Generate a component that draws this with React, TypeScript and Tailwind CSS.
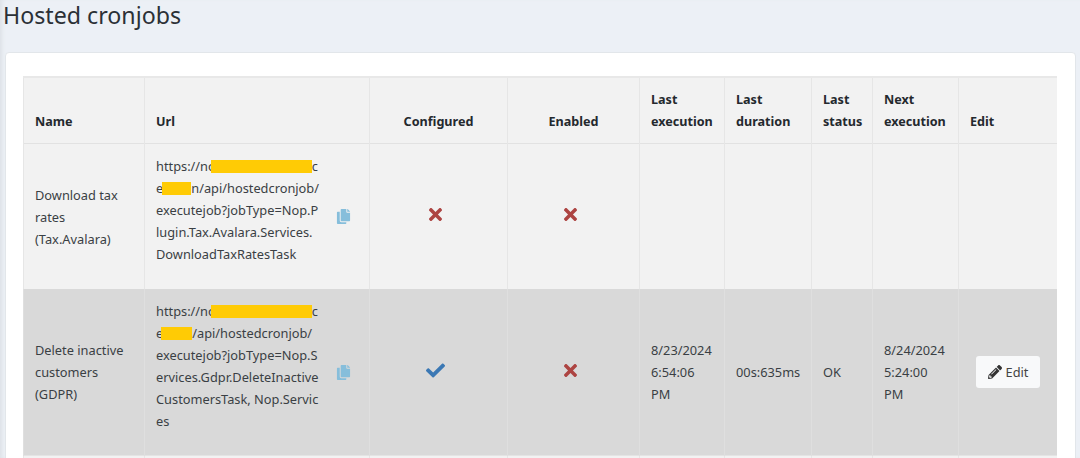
import { FaCheck, FaCopy, FaPencilAlt, FaTimes } from "react-icons/fa"

const headerCell = "border-l border-[#e6e6e6] px-[11px] pb-[10px] pt-[11px] align-bottom text-[12.6px] font-bold text-[#24292e]"
const cell = "border-l px-[11px] py-[11px] align-middle"

function Redacted({ className }: { className: string }) {
  return <span className={`inline-block h-[13px] bg-[#ffcb05] align-[-2px] ${className}`} />
}

function UrlCell({ lines, extra, border }: { lines: React.ReactNode[]; extra: string; border: string }) {
  return (
    <td className={`${cell} ${border}`}>
      <div className="flex items-center">
        <div className={`w-[165px] whitespace-nowrap ${extra}`}>
          {lines.map((line, i) => (
            <div key={i}>{line}</div>
          ))}
        </div>
        <FaCopy className="ml-[15px] size-[15px] text-[#86bedb]" />
      </div>
    </td>
  )
}

function Cross() {
  return <FaTimes className="mx-auto size-[19px] -translate-x-[3px] -translate-y-[2px] text-[#ad4442]" />
}

export default function App() {
  return (
    <div className="h-[458px] overflow-hidden bg-[#ecf0f6] font-['Noto_Sans',sans-serif] text-[12.8px] leading-[22px] text-[#3a3f44] shadow-[inset_4px_0_4px_-2px_#dde1e6]">
      <h1 className="h-[52px] pl-[3px] text-[23.2px] leading-[31px] text-[#2b3036]">Hosted cronjobs</h1>
      <div className="ml-[5px] mr-[4px] h-[420px] rounded-[4px] border border-[#e2e6ea] bg-white pl-[17px] pt-[23px]">
        <table className="w-[1033px] table-fixed border-collapse border-t-2 border-[#e8e8e8] bg-[#f2f2f2]">
          <colgroup>
            <col className="w-[121px]" />
            <col className="w-[225px]" />
            <col className="w-[138px]" />
            <col className="w-[132px]" />
            <col className="w-[85px]" />
            <col className="w-[87px]" />
            <col className="w-[61px]" />
            <col className="w-[86px]" />
            <col className="w-[98px]" />
          </colgroup>
          <thead>
            <tr className="border-b border-[#e2e2e2]">
              <th className={`${headerCell} text-left`}>Name</th>
              <th className={`${headerCell} text-left`}>Url</th>
              <th className={`${headerCell} text-center`}>Configured</th>
              <th className={`${headerCell} text-center`}>Enabled</th>
              <th className={`${headerCell} text-left`}>Last<br />execution</th>
              <th className={`${headerCell} text-left`}>Last<br />duration</th>
              <th className={`${headerCell} text-left`}>Last<br />status</th>
              <th className={`${headerCell} text-left`}>Next<br />execution</th>
              <th className={`${headerCell} text-left`}>Edit</th>
            </tr>
          </thead>
          <tbody>
            <tr>
              <td className={`${cell} border-[#e6e6e6]`}>Download tax<br />rates<br />(Tax.Avalara)</td>
              <UrlCell
                border="border-[#e6e6e6]"
                extra="pb-[13px]"
                lines={[
                  <>https://no<Redacted className="-ml-[5px] w-[101px]" />c</>,
                  <>e<Redacted className="-ml-[1px] w-[29px]" />n/api/hostedcronjob/</>,
                  "executejob?jobType=Nop.P",
                  "lugin.Tax.Avalara.Services.",
                  "DownloadTaxRatesTask",
                ]}
              />
              <td className={`${cell} border-[#e6e6e6]`}><Cross /></td>
              <td className={`${cell} border-[#e6e6e6]`}><Cross /></td>
              <td className={`${cell} border-[#e6e6e6]`}></td>
              <td className={`${cell} border-[#e6e6e6]`}></td>
              <td className={`${cell} border-[#e6e6e6]`}></td>
              <td className={`${cell} border-[#e6e6e6]`}></td>
              <td className={`${cell} border-[#e6e6e6]`}></td>
            </tr>
            <tr className="bg-[#d9d9d9]">
              <td className={`${cell} border-[#dfdfdf]`}>Delete inactive<br />customers<br />(GDPR)</td>
              <UrlCell
                border="border-[#dfdfdf]"
                extra="pb-[12px]"
                lines={[
                  <>https://no<Redacted className="-ml-[5px] w-[101px]" />c</>,
                  <>e<Redacted className="-ml-[2px] w-[31px]" />/api/hostedcronjob/</>,
                  "executejob?jobType=Nop.S",
                  "ervices.Gdpr.DeleteInactive",
                  "CustomersTask, Nop.Servic",
                  "es",
                ]}
              />
              <td className={`${cell} border-[#dfdfdf]`}><FaCheck className="mx-auto size-[19px] -translate-x-[3px] -translate-y-[2px] text-[#3b78b4]" /></td>
              <td className={`${cell} border-[#dfdfdf]`}><Cross /></td>
              <td className={`${cell} border-[#dfdfdf]`}>8/23/2024<br />6:54:06<br />PM</td>
              <td className={`${cell} border-[#dfdfdf]`}>00s:635ms</td>
              <td className={`${cell} border-[#dfdfdf]`}>OK</td>
              <td className={`${cell} border-[#dfdfdf]`}>8/24/2024<br />5:24:00<br />PM</td>
              <td className={`${cell} border-[#dfdfdf] pl-[17px]`}>
                <button className="flex h-[32px] w-[64px] items-center justify-center gap-[4px] rounded-[3px] bg-[#f8f9fa] text-[#444]">
                  <FaPencilAlt className="size-[14px] text-[#333]" />
                  Edit
                </button>
              </td>
            </tr>
            <tr className="h-[40px] border-t border-[#e4e4e4]">
              <td className={`${cell} border-[#e6e6e6]`}></td>
              <td className={`${cell} border-[#e6e6e6]`}></td>
              <td className={`${cell} border-[#e6e6e6]`}></td>
              <td className={`${cell} border-[#e6e6e6]`}></td>
              <td className={`${cell} border-[#e6e6e6]`}></td>
              <td className={`${cell} border-[#e6e6e6]`}></td>
              <td className={`${cell} border-[#e6e6e6]`}></td>
              <td className={`${cell} border-[#e6e6e6]`}></td>
              <td className={`${cell} border-[#e6e6e6]`}></td>
            </tr>
          </tbody>
        </table>
      </div>
    </div>
  )
}
